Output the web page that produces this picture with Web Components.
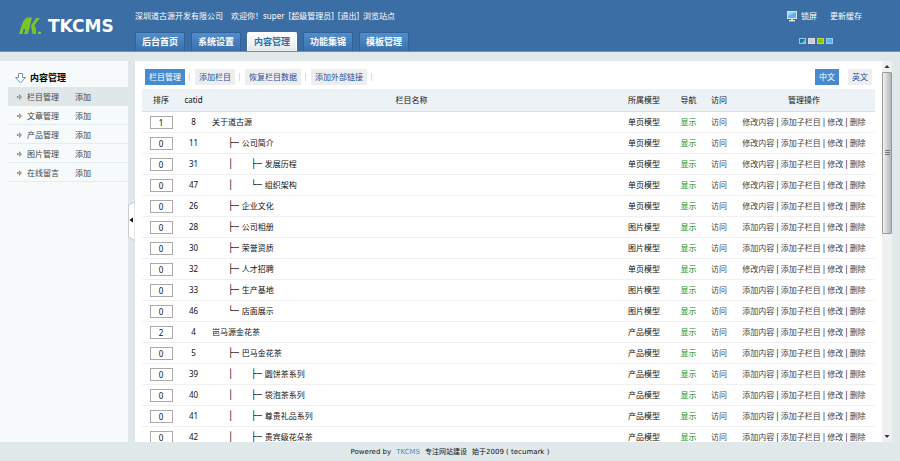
<!DOCTYPE html>
<html lang="zh-CN">
<head>
<meta charset="utf-8">
<title>TKCMS</title>
<style>
html, body { margin: 0; height: 100%; }
body { overflow: hidden; font: 8px/12px "Noto Sans", "Noto Sans CJK SC", sans-serif; color: #111; background: #e0e8ea; }
</style>
</head>
<body>
<cms-app>
  <cms-header slot="header">
    <cms-tab>后台首页</cms-tab>
    <cms-tab>系统设置</cms-tab>
    <cms-tab active>内容管理</cms-tab>
    <cms-tab>功能集锦</cms-tab>
    <cms-tab>模板管理</cms-tab>
  </cms-header>
  <cms-sidebar slot="side">
    <span slot="title">内容管理</span>
    <cms-menu-item active>栏目管理</cms-menu-item>
    <cms-menu-item>文章管理</cms-menu-item>
    <cms-menu-item>产品管理</cms-menu-item>
    <cms-menu-item>图片管理</cms-menu-item>
    <cms-menu-item>在线留言</cms-menu-item>
  </cms-sidebar>
  <cms-panel>
    <cms-toolbar>
      <cms-chip active divided>栏目管理</cms-chip>
      <cms-chip divided>添加栏目</cms-chip>
      <cms-chip divided>恢复栏目数据</cms-chip>
      <cms-chip divided>添加外部链接</cms-chip>
      <cms-chip slot="end" active>中文</cms-chip>
      <cms-chip slot="end">英文</cms-chip>
    </cms-toolbar>
    <cms-category-table></cms-category-table>
  </cms-panel>
  <cms-footer slot="footer"></cms-footer>
</cms-app>
<script>
const define = (name, html, setup) => customElements.define(name, class extends HTMLElement {
  constructor() {
    super();
    const t = document.createElement('template');
    t.innerHTML = html;
    this.attachShadow({ mode: 'open' }).append(t.content.cloneNode(true));
    if (setup) setup(this.shadowRoot);
  }
});

define('cms-app', `<style>
:host { display: flex; flex-direction: column; height: 100vh; }
.body { flex: 1; min-height: 0; display: flex; padding: 9px 8px 0 0; }
.grip { width: 7px; display: flex; align-items: center; }
button { border: 0; padding: 0; background: none; width: 7px; height: 40px; margin-top: -62px; display: block; }
svg { display: block; }
</style>
<slot name="header"></slot>
<div class="body"><slot name="side"></slot>
<div class="grip"><button aria-label="收起"><svg width="7" height="40" viewBox="0 0 7 40"><path d="M7 1L.5 4V36L7 39.500Z" fill="#fff" stroke="#b4bcc0" stroke-width=".7"/><path d="M1.500 19L5 16.500V21.500Z" fill="#111"/></svg></button></div>
<slot></slot></div>
<slot name="footer"></slot>`);

define('cms-header', `<style>
:host { display: flex; background: #3a6ea5; color: #fff; border-bottom: 1px solid #6493bd; height: 51px; }
a { color: inherit; text-decoration: none; }
.brand { width: 135px; box-sizing: border-box; padding: 16px 0 0 18px; display: flex; gap: 5px; }
.brand b { font: bold 17px/20px "DejaVu Sans", sans-serif; }
.mid { flex: 1; display: flex; flex-direction: column; justify-content: space-between; padding-top: 10px; }
.user { display: flex; }
.user span { margin-left: 8px; } .user a { margin-left: 4px; }
nav { display: flex; gap: 6px; }
.right { padding: 10px 38px 0 0; display: flex; flex-direction: column; gap: 16px; }
.tools { display: flex; gap: 13px; }
.tools a { display: flex; gap: 4px; align-items: center; }
.skins { display: flex; gap: 2px; padding-left: 12px; }
.skins button { width: 7px; height: 6px; padding: 0; border: 1px solid #8fc6e6; background: linear-gradient(135deg, #137a9e 50%, #b9e3f0); }
.skins button:nth-child(2) { background: #ccc; border-color: #ddd; }
.skins button:nth-child(3) { background: #8fc400; border-color: #b5dc4a; }
.skins button:nth-child(4) { background: #55b5ee; border-color: #8ed0f5; }
</style>
<div class="brand"><svg width="25" height="20" viewBox="0 0 25 20"><path d="M9 1.500H14L10 18H6L7.500 13H5.500L4.500 18H1C3 13 4 4 9 1.500ZM14 8L18 2H22L16.500 9L18 13V18H14.500L13 10ZM20 15.500L23 16V18H20Z" fill="#7cc42c"/></svg><b>TKCMS</b></div>
<div class="mid"><div class="user">深圳道古源开发有限公司<span>欢迎你！super</span><a href="#">[超级管理员]</a><a href="#">[退出]</a><a href="#">浏览站点</a></div><nav><slot></slot></nav></div>
<div class="right"><div class="tools"><a href="#"><svg width="10" height="11" viewBox="0 0 10 11"><rect x=".5" y=".5" width="9" height="7" fill="#5bb1f3" stroke="#d8e2ea"/><path d="M1 1H9L1 5Z" fill="#9bd0fa"/><path d="M4 8H6V9H8V10.500H2V9H4Z" fill="#e0ded4"/></svg>锁屏</a><a href="#">更新缓存</a></div>
<div class="skins"><button aria-label="蓝"></button><button aria-label="灰"></button><button aria-label="绿"></button><button aria-label="天蓝"></button></div></div>`);

define('cms-tab', `<style>
:host { display: block; }
a { display: block; box-sizing: border-box; padding: 0 6px; border: 1px solid #316297; border-bottom: 0; border-radius: 2px 2px 0 0; background: linear-gradient(#528ecb, #3a6fac); color: #fff; font-weight: bold; font-size: 9px; line-height: 18px; text-decoration: none; }
:host([active]) a { background: linear-gradient(#fff, #e3eaec); color: #2b6ea9; border-color: #fff; }
</style><a href="#"><slot></slot></a>`);

define('cms-sidebar', `<style>
:host { display: block; width: 128px; box-sizing: border-box; background: #f6fafb; padding: 8px 0 0 8px; }
h3 { margin: 0; display: flex; align-items: center; gap: 4px; height: 18px; padding-left: 7px; font-size: 9px; color: #000; }
</style>
<h3><svg width="11" height="11" viewBox="0 0 11 11"><path d="M3.500 .5H7.500V4.500H10.500L5.500 10L.5 4.500H3.500Z" fill="#fff" stroke="#7892b5"/></svg><slot name="title"></slot></h3>
<slot></slot>`);

define('cms-menu-item', `<style>
:host { display: flex; align-items: center; height: 19px; box-sizing: border-box; border-bottom: 1px solid #e4ecf0; padding: 1px 0 0 9px; }
:host([active]) { background: #e0e7e8; border-color: #e0e7e8; }
a { color: #444; text-decoration: none; } a + a { margin-left: 16px; }
svg { margin-right: 5px; }
</style><svg width="5" height="6" viewBox="0 0 5 6"><path d="M0 2H2V0L5 3L2 6V4H0Z" fill="#888"/><path d="M1 3H3.500" stroke="#fff" stroke-width=".7"/></svg><a href="#"><slot></slot></a><a href="#">添加</a>`);

define('cms-panel', `<style>
:host { display: flex; flex: 1; min-width: 0; background: #fff; overflow: hidden; }
.content { flex: 1; min-width: 0; padding: 8px 7px 0; overflow: hidden; }
.bar { width: 10px; background: #f0f0f0; display: flex; flex-direction: column; }
.thumb { height: 162px; box-sizing: border-box; border: 1px solid #999; border-radius: 1px; background: linear-gradient(90deg, #f4f4f4, #d2d2d4 50%, #b4b4b8); display: flex; align-items: center; justify-content: center; }
.space { flex: 1; }
svg { display: block; }
</style>
<div class="content"><slot></slot></div>
<div class="bar"><svg width="10" height="11" viewBox="0 0 10 11"><path d="M2.500 7L5 4L7.500 7Z" fill="#333"/></svg>
<div class="thumb"><svg width="5" height="6" viewBox="0 0 5 6"><path d="M0 .5H5M0 2.500H5M0 4.500H5" stroke="#777"/></svg></div><div class="space"></div>
<svg width="10" height="11" viewBox="0 0 10 11"><path d="M2.500 4L5 7L7.500 4Z" fill="#333"/></svg></div>`);

define('cms-toolbar', `<style>
:host { display: flex; justify-content: space-between; padding: 0 3px 4px; }
div { display: flex; } .end { gap: 9px; }
</style><div><slot></slot></div><div class="end"><slot name="end"></slot></div>`);

define('cms-chip', `<style>
:host { display: flex; align-items: center; }
a { padding: 0 4px; line-height: 16px; background: #eee; color: #1f4f9b; text-decoration: none; }
:host([active]) a { background: #468bd0; color: #fff; }
i { display: none; width: 1px; height: 8px; background: #ddd; margin: 0 5px 0 4px; }
:host([divided]) i { display: block; }
</style><a href="#"><slot></slot></a><i></i>`);

const rows = [
  [1, 8, 0, '', '关于道古源', '单页'], [0, 11, 1, '├─', '公司简介', '单页'],
  [0, 31, 2, '├─', '发展历程', '单页'], [0, 47, 2, '└─', '组织架构', '单页'],
  [0, 26, 1, '├─', '企业文化', '单页'], [0, 28, 1, '├─', '公司相册', '图片'],
  [0, 30, 1, '├─', '荣誉资质', '图片'], [0, 32, 1, '├─', '人才招聘', '单页'],
  [0, 33, 1, '├─', '生产基地', '图片'], [0, 46, 1, '└─', '店面展示', '图片'],
  [2, 4, 0, '', '岜马源金花茶', '产品'], [0, 5, 1, '├─', '巴马金花茶', '产品'],
  [0, 39, 2, '├─', '圆饼茶系列', '产品'], [0, 40, 2, '├─', '袋泡茶系列', '产品'],
  [0, 41, 2, '├─', '尊贵礼品系列', '产品'], [0, 42, 2, '├─', '贵宾级花朵茶', '产品']
];

define('cms-category-table', `<style>
:host { display: block; }
table { width: 100%; table-layout: fixed; border-collapse: separate; border-spacing: 0; }
th, td { padding: 0; height: 20px; text-align: center; font-weight: normal; white-space: nowrap; border-bottom: 1px solid #f0f0f0; }
th { height: 22px; background: #ecf2f6; border-color: #d5e0e8; color: #111; }
td:nth-child(3) { text-align: left; padding-left: 5px; }
input { display: block; margin: 0 auto; width: 23px; height: 13px; box-sizing: border-box; border: 1px solid #aaa; padding: 0; font: inherit; color: inherit; text-align: center; background: #fff; }
.name { display: flex; align-items: center; }
.t { font: 9px/12px "DejaVu Sans", sans-serif; }
.bar { width: 23px; margin-left: 16px; }
.branch { margin-right: 3px; }
.l1 .branch { margin-left: 16px; }
a { color: #444; text-decoration: none; }
.show { color: #088a08; }
.ops { display: inline-flex; gap: 1px; }
</style>
<table><colgroup><col style="width:38px"><col style="width:27px"><col><col style="width:56px"><col style="width:33px"><col style="width:28px"><col style="width:142px"></colgroup>
<thead><tr><th>排序</th><th>catid</th><th>栏目名称</th><th>所属模型</th><th>导航</th><th>访问</th><th>管理操作</th></tr></thead><tbody></tbody></table>`, root => {
  root.querySelector('tbody').innerHTML = rows.map(([order, id, level, branch, name, model]) => `<tr>
<td><input value="${order}" aria-label="${name} 排序"></td><td>${id}</td>
<td><div class="name l${level}">${level === 2 ? '<span class="t bar">│</span>' : ''}${branch ? `<span class="t branch">${branch}</span>` : ''}<span>${name}</span></div></td>
<td>${model}模型</td><td class="show">显示</td><td><a href="#">访问</a></td>
<td><span class="ops"><a href="#">${model === '单页' ? '修改' : '添加'}内容</a><span>|</span><a href="#">添加子栏目</a><span>|</span><a href="#">修改</a><span>|</span><a href="#">删除</a></span></td></tr>`).join('');
});

define('cms-footer', `<style>
:host { display: flex; justify-content: center; gap: 5px; height: 19px; padding-top: 1px; box-sizing: border-box; align-items: center; font: 7px/12px "DejaVu Sans", "Noto Sans CJK SC", sans-serif; color: #111; background: #e0e8ea; }
a { color: #4a8ac6; text-decoration: none; }
</style><span>Powered by</span><a href="#">TKCMS</a><span>专注网站建设</span><span>始于2009 ( tecumark )</span>`);
</script>
</body>
</html>
